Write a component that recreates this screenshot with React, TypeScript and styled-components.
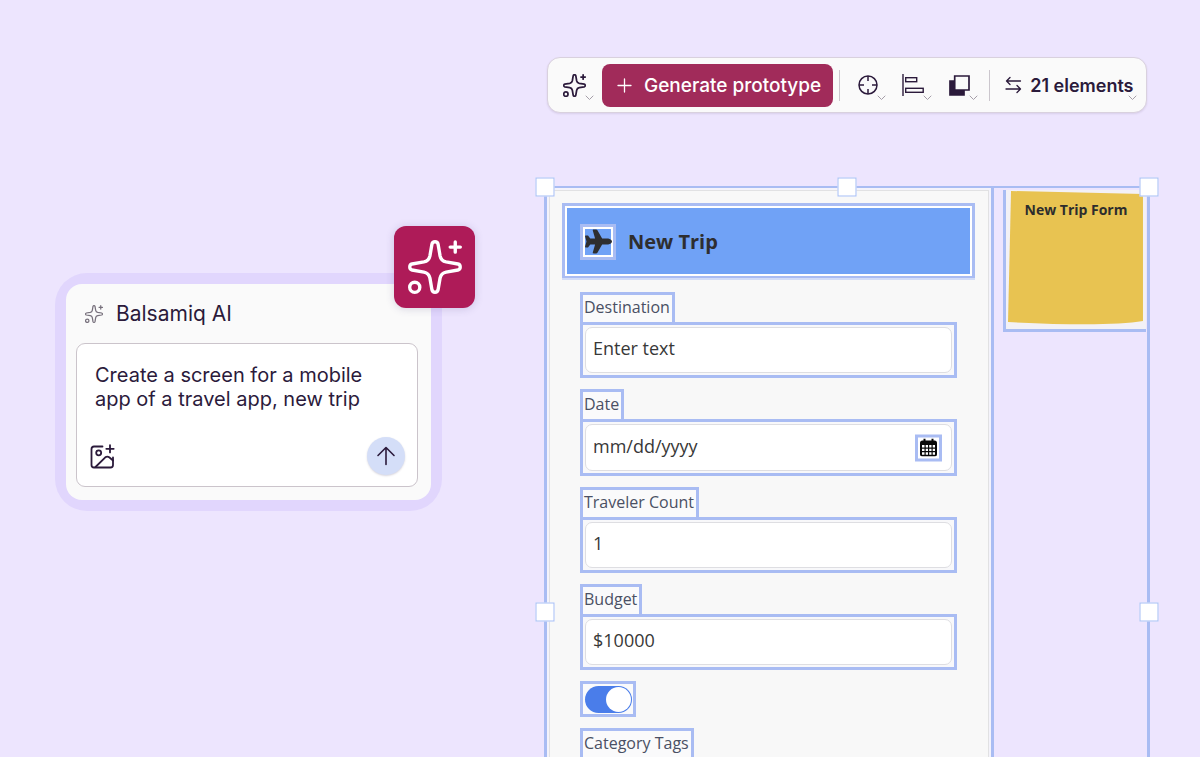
import React from "react";
import styled, { createGlobalStyle, css } from "styled-components";
import { FaPlane } from "react-icons/fa6";

const ink = "#2b1a3b";
const outline = "#a9bcf3";
const uiFont = `"Inter", "Liberation Sans", sans-serif`;
const wireFont = `"Open Sans", "Noto Sans", sans-serif`;

const GlobalStyle = createGlobalStyle`
  * { box-sizing: border-box; }
  body { margin: 0; background: #ede5fe; color: ${ink}; font-family: ${uiFont}; }
  button, input, textarea { font: inherit; color: inherit; }
  button { border: 0; background: none; padding: 0; cursor: pointer; }
  svg { display: block; flex: none; }
`;

const Page = styled.main`
  display: grid;
  grid-template-columns: minmax(0, 387fr) minmax(0, 605fr);
  column-gap: 103px;
  align-items: start;
  height: 100vh;
  overflow: hidden;
  padding: 57px 50px 0 55px;
`;

/* ---------- AI prompt card ---------- */

const PromptCard = styled.section`
  position: relative;
  margin-top: 216px;
  padding: 11px;
  border-radius: 32px;
  background: #e1d6fd;
`;

const PromptBody = styled.div`
  padding: 0 13px 13px 10px;
  border-radius: 16px;
  background: #fafafa;
`;

const PromptHeader = styled.header`
  display: flex;
  align-items: center;
  gap: 13px;
  height: 59px;
  padding-left: 9px;
`;

const HeaderMark = styled.span`
  color: #77707c;
`;

const PromptTitle = styled.h2`
  margin: 0;
  font-size: 21px;
  font-weight: 400;
  line-height: 24px;
`;

const Composer = styled.div`
  padding: 19px 12px 11px 13px;
  border: 1px solid #cbc4cb;
  border-radius: 9px;
  background: #fff;
`;

const PromptText = styled.textarea`
  display: block;
  width: 100%;
  height: 48px;
  margin: 0;
  padding: 0 0 0 5px;
  border: 0;
  outline: 0;
  resize: none;
  overflow: hidden;
  background: none;
  font-size: 20px;
  line-height: 24px;
`;

const ComposerActions = styled.div`
  display: flex;
  align-items: center;
  justify-content: space-between;
  margin-top: 26px;
`;

const IconButton = styled.button`
  display: grid;
  place-items: center;
`;

const SendButton = styled(IconButton)`
  width: 38px;
  height: 38px;
  border-radius: 50%;
  background: #d4def8;
  box-shadow: 0 1px 2px rgba(60, 50, 90, 0.2);
`;

const Badge = styled.div`
  position: absolute;
  top: -47px;
  right: -33px;
  display: grid;
  place-items: center;
  width: 81px;
  height: 82px;
  border-radius: 12px;
  background: #ae1b58;
  color: #fff;
  box-shadow: 0 1px 8px rgba(70, 60, 120, 0.2);
`;

/* ---------- Toolbar ---------- */

const Toolbar = styled.div`
  display: flex;
  align-items: center;
  height: 56px;
  margin: 0 3px 0 2px;
  padding: 0 11px 0 15px;
  border: 1px solid #d9d1de;
  border-radius: 13px;
  background: #fafafa;
  box-shadow: 0 1px 2px rgba(70, 50, 90, 0.12);
`;

const ToolButton = styled.button<{ $gap?: number }>`
  position: relative;
  display: flex;
  align-items: center;
  gap: 8px;
  height: 30px;
  margin-right: ${(p) => p.$gap ?? 0}px;
  font-size: 18px;
  font-weight: 600;
  white-space: nowrap;
`;

const CaretIcon = styled.svg<{ $inset?: boolean }>`
  position: absolute;
  right: ${(p) => (p.$inset ? -3 : -8)}px;
  bottom: -1px;
`;

const GenerateButton = styled.button`
  display: flex;
  align-items: center;
  gap: 12px;
  height: 43px;
  margin-right: 6px;
  padding: 0 12px 0 15px;
  border-radius: 8px;
  background: #a12b5a;
  color: #fff;
  font-size: 19px;
  font-weight: 500;
  white-space: nowrap;
`;

const Divider = styled.span<{ $gap: number }>`
  width: 1px;
  height: 31px;
  margin-right: ${(p) => p.$gap}px;
  background: #cbc6cd;
`;

/* ---------- Canvas ---------- */

const Workspace = styled.section`
  min-width: 0;
`;

const Selection = styled.div`
  position: relative;
  display: flex;
  align-items: flex-start;
  min-height: 852px;
  margin: 73px 0 0 -1px;
  border: 3px solid ${outline};
  border-top-width: 2px;
`;

const handleSpots = {
  tl: css`top: -1px; left: -2px;`,
  tc: css`top: -1px; left: 50%;`,
  tr: css`top: -1px; left: calc(100% + 2px);`,
  ml: css`top: 50%; left: -2px;`,
  mr: css`top: 50%; left: calc(100% + 2px);`,
};

const Handle = styled.span<{ $spot: keyof typeof handleSpots }>`
  position: absolute;
  width: 19px;
  height: 19px;
  border: 1px solid #a5bdf5;
  background: #fff;
  transform: translate(-50%, -50%);
  ${(p) => handleSpots[p.$spot]}
`;

const ScreenFrame = styled.div`
  flex: 1;
  min-width: 0;
  margin-right: 9px;
  padding: 2px 2px 0;
  border-right: 3px solid ${outline};
  background: #f4f3fb;
`;

const Screen = styled.div`
  min-height: 846px;
  padding: 12px 13px 0 12px;
  border: 1px solid #e1e1e3;
  border-bottom: 0;
  background: #f8f8f8;
`;

const ScreenHeaderFrame = styled.div`
  padding: 2px;
  border: 3px solid ${outline};
  border-bottom-width: 2px;
  background: #fff;
  box-shadow: 0 2px 0 #d2dcf8;
`;

const ScreenHeader = styled.header`
  display: flex;
  align-items: center;
  gap: 12px;
  height: 66px;
  padding: 1px 13px 0;
  background: #70a2f6;
  color: #2e2e30;
`;

const PlaneFrame = styled.span`
  display: grid;
  place-items: center;
  width: 36px;
  height: 36px;
  border: 3px solid ${outline};
  box-shadow: inset 0 0 0 2px #fff;
`;

const ScreenTitle = styled.h1`
  margin: 0;
  font: 700 20px/28px ${wireFont};
`;

const Form = styled.form`
  display: flex;
  flex-direction: column;
  align-items: flex-start;
  gap: 11px;
  padding: 14px 18px 0;
  font-family: ${wireFont};
`;

const Field = styled.div`
  display: flex;
  flex-direction: column;
  align-items: flex-start;
  width: 100%;
`;

const FieldLabel = styled.label`
  height: 30px;
  padding: 0 2px 0 1px;
  border: 3px solid ${outline};
  border-bottom: 0;
  background: #fafafb;
  color: #4a5064;
  font-size: 16px;
  line-height: 24px;
  white-space: nowrap;
`;

const InputFrame = styled.div<{ $height: number }>`
  position: relative;
  width: 100%;
  height: ${(p) => p.$height}px;
  padding: 2px;
  border: 3px solid ${outline};
  background: #f8f8fa;
`;

const TextInput = styled.input`
  display: block;
  width: 100%;
  height: 100%;
  padding: 0 7px 4px;
  border: 1px solid #dedee2;
  border-radius: 7px;
  outline: 0;
  background: #fff;
  color: #383838;
  font-size: 18px;

  &::placeholder { color: #383838; opacity: 1; }
`;

const CalendarButton = styled(IconButton)`
  position: absolute;
  top: 50%;
  right: 12px;
  width: 27px;
  height: 27px;
  border: 3px solid ${outline};
  background: #fff;
  color: #080808;
  transform: translateY(-50%);
`;

const ToggleFrame = styled.label`
  display: grid;
  place-items: center;
  width: 56px;
  height: 36px;
  border: 3px solid ${outline};
  background: #fafafb;
`;

const Toggle = styled.input`
  appearance: none;
  display: flex;
  justify-content: flex-end;
  align-items: center;
  width: 47px;
  height: 27px;
  margin: 0;
  padding: 1px;
  border-radius: 14px;
  background: #4a7dea;

  &::before {
    content: "";
    width: 25px;
    height: 25px;
    border-radius: 50%;
    background: #fff;
  }
  &:not(:checked) { justify-content: flex-start; }
`;

const NoteFrame = styled.aside`
  position: relative;
  width: 143px;
  height: 142px;
  margin: 2px 1px 0 0;
  border: solid ${outline};
  border-width: 0 0 3px 3px;
  background: #f3f1f6;
`;

const NotePaper = styled.svg`
  position: absolute;
  inset: 0;
  width: 100%;
  height: 100%;
`;

const NoteText = styled.p`
  position: relative;
  margin: 10px 0 0;
  color: #2d2d2d;
  font: 700 14px/20px ${wireFont};
  text-align: center;
`;

/* ---------- Icons ---------- */

const Sparkle = ({ size, weight }: { size: number; weight: number }) => (
  <svg width={size} height={size} viewBox="-80 -80 160 160" fill="none" stroke="currentColor"
    strokeWidth={weight} strokeLinecap="round" strokeLinejoin="round" aria-hidden="true">
    <path d="M-9-68C-7-77 7-77 9-68L15-33Q18-18 33-15L68-9C77-7 77 7 68 9L33 15Q18 18 15 33L9 68C7 77-7 77-9 68L-15 33Q-18 18-33 15L-68 9C-77 7-77-7-68-9L-33-15Q-18-18-15-33Z" />
    <path d="M60-74V-44M45-59H75" />
    <circle cx="-60" cy="60" r="15" />
  </svg>
);

const Caret = ({ inset }: { inset?: boolean }) => (
  <CaretIcon $inset={inset} width="9" height="6" viewBox="0 0 9 6" fill="none" stroke="#a59ea8" strokeLinecap="round" aria-hidden="true">
    <path d="M1 1L4.500 4.500L8 1" />
  </CaretIcon>
);

const PlusIcon = () => (
  <svg width="15" height="15" viewBox="0 0 15 15" stroke="currentColor" strokeWidth="1.300" strokeLinecap="round" aria-hidden="true">
    <path d="M7.500 1V14M1 7.500H14" />
  </svg>
);

const TargetIcon = () => (
  <svg width="20" height="20" viewBox="0 0 20 20" fill="none" stroke="currentColor" strokeWidth="1.500" aria-hidden="true">
    <circle cx="10" cy="10" r="9" />
    <path d="M10 1V6M10 14V19M1 10H6M14 10H19" />
  </svg>
);

const AlignIcon = () => (
  <svg width="22" height="22" viewBox="0 0 22 22" fill="none" stroke="currentColor" strokeWidth="1.400" aria-hidden="true">
    <path d="M1 0V22" />
    <rect x="3.700" y="3.700" width="11" height="4" />
    <rect x="3.700" y="14.300" width="17.500" height="4" />
  </svg>
);

const LayersIcon = () => (
  <svg width="21" height="21" viewBox="0 0 21 21" stroke="currentColor" strokeWidth="1.700" aria-hidden="true">
    <path d="M1 6H15V20H1Z" fill="currentColor" />
    <path d="M5.700 1H20V15H5.700Z" fill="#fafafa" />
  </svg>
);

const SwapIcon = () => (
  <svg width="17" height="18" viewBox="0 0 17 18" fill="none" stroke="currentColor" strokeWidth="1.300" strokeLinecap="round" strokeLinejoin="round" aria-hidden="true">
    <path d="M15.500 5H1.500M5 1.500L1.500 5L5 8.500M1 13H15.500M12 9.500L15.500 13L12 16.500" />
  </svg>
);

const AddImageIcon = () => (
  <svg width="25" height="25" viewBox="0 0 25 25" fill="none" stroke="currentColor" strokeWidth="1.800" strokeLinecap="round" strokeLinejoin="round" aria-hidden="true">
    <path d="M12.500 2.500H4Q1.500 2.500 1.500 5V21Q1.500 23.500 4 23.500H20.500Q23 23.500 23 21V13.500" />
    <path d="M20 1.200V8.400M16.300 4.800H23.700" />
    <circle cx="8.700" cy="8.800" r="2.500" />
    <path d="M5.500 23L15.300 13.300Q17.300 11.800 19.200 13.300L23 16.500" />
  </svg>
);

const ArrowUpIcon = () => (
  <svg width="20" height="20" viewBox="0 0 20 20" fill="none" stroke="currentColor" strokeWidth="1.600" strokeLinecap="round" strokeLinejoin="round" aria-hidden="true">
    <path d="M10 18.500V1.500M2 9.500L10 1.500L18 9.500" />
  </svg>
);

const CalendarIcon = () => (
  <svg width="17" height="18" viewBox="0 0 17 18" aria-hidden="true">
    <path d="M3.500 0H5.500V2H11.500V0H13.500V2H14.500Q17 2 17 4.500V15.500Q17 18 14.500 18H2.500Q0 18 0 15.500V4.500Q0 2 2.500 2H3.500Z" fill="currentColor" />
    <path d="M2 6.500H4.500V9H2ZM5.700 6.500H8V9H5.700ZM9.200 6.500H11.500V9H9.200ZM12.700 6.500H15V9H12.700ZM2 10.200H4.500V12.600H2ZM5.700 10.200H8V12.600H5.700ZM9.200 10.200H11.500V12.600H9.200ZM12.700 10.200H15V12.600H12.700ZM2 13.800H4.500V16.200H2ZM5.700 13.800H8V16.200H5.700ZM9.200 13.800H11.500V16.200H9.200ZM12.700 13.800H15V16.200H12.700Z" fill="#fff" />
  </svg>
);

/* ---------- Parts ---------- */

type TripFieldProps = {
  id: string;
  label: string;
  placeholder?: string;
  value?: string;
  height?: number;
  children?: React.ReactNode;
};

const TripField = ({ id, label, placeholder, value, height = 56, children }: TripFieldProps) => (
  <Field>
    <FieldLabel htmlFor={id}>{label}</FieldLabel>
    <InputFrame $height={height}>
      <TextInput id={id} type="text" placeholder={placeholder} defaultValue={value} />
      {children}
    </InputFrame>
  </Field>
);

export default function App() {
  return (
    <>
      <GlobalStyle />
      <Page>
        <PromptCard>
          <PromptBody>
            <PromptHeader>
              <HeaderMark><Sparkle size={18} weight={11} /></HeaderMark>
              <PromptTitle>Balsamiq AI</PromptTitle>
            </PromptHeader>
            <Composer>
              <PromptText
                aria-label="Prompt"
                spellCheck={false}
                defaultValue={"Create a screen for a mobile\napp of a travel app, new trip"}
              />
              <ComposerActions>
                <IconButton type="button" aria-label="Add image"><AddImageIcon /></IconButton>
                <SendButton type="button" aria-label="Send"><ArrowUpIcon /></SendButton>
              </ComposerActions>
            </Composer>
          </PromptBody>
          <Badge><Sparkle size={54} weight={10} /></Badge>
        </PromptCard>

        <Workspace>
          <Toolbar role="toolbar" aria-label="Selection tools">
            <ToolButton type="button" aria-label="AI tools" $gap={16}><Sparkle size={23} weight={12} /><Caret /></ToolButton>
            <GenerateButton type="button"><PlusIcon />Generate prototype</GenerateButton>
            <Divider $gap={18} />
            <ToolButton type="button" aria-label="Center" $gap={24}><TargetIcon /><Caret /></ToolButton>
            <ToolButton type="button" aria-label="Align" $gap={25}><AlignIcon /><Caret /></ToolButton>
            <ToolButton type="button" aria-label="Arrange" $gap={19}><LayersIcon /><Caret /></ToolButton>
            <Divider $gap={15} />
            <ToolButton type="button"><SwapIcon />21 elements<Caret inset /></ToolButton>
          </Toolbar>

          <Selection>
            <ScreenFrame>
              <Screen>
                <ScreenHeaderFrame>
                  <ScreenHeader>
                    <PlaneFrame><FaPlane size={27} /></PlaneFrame>
                    <ScreenTitle>New Trip</ScreenTitle>
                  </ScreenHeader>
                </ScreenHeaderFrame>
                <Form>
                  <TripField id="destination" label="Destination" placeholder="Enter text" />
                  <TripField id="date" label="Date" placeholder="mm/dd/yyyy" height={57}>
                    <CalendarButton type="button" aria-label="Choose date"><CalendarIcon /></CalendarButton>
                  </TripField>
                  <TripField id="travelers" label="Traveler Count" value="1" />
                  <TripField id="budget" label="Budget" value="$10000" />
                  <ToggleFrame><Toggle type="checkbox" role="switch" aria-label="Budget limit" defaultChecked /></ToggleFrame>
                  <TripField id="tags" label="Category Tags" />
                </Form>
              </Screen>
            </ScreenFrame>
            <NoteFrame>
              <NotePaper viewBox="0 0 139 139" preserveAspectRatio="none" aria-hidden="true">
                <path d="M5 1L136 4V131Q100 137 2 132Z" fill="#e8c351" />
              </NotePaper>
              <NoteText>New Trip Form</NoteText>
            </NoteFrame>
            <Handle $spot="tl" />
            <Handle $spot="tc" />
            <Handle $spot="tr" />
            <Handle $spot="ml" />
            <Handle $spot="mr" />
          </Selection>
        </Workspace>
      </Page>
    </>
  );
}
